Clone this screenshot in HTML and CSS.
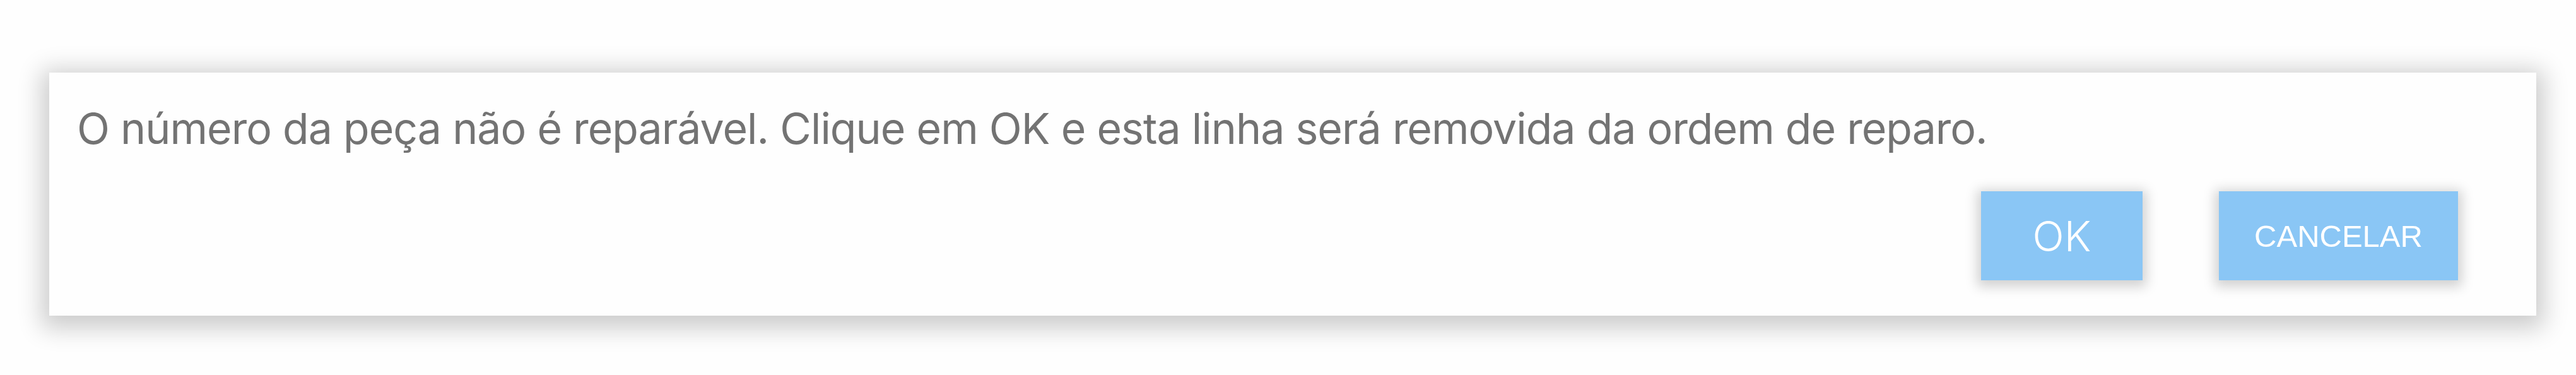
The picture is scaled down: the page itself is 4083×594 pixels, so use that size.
FILE: index.html
```html
<!DOCTYPE html>
<html lang="pt">
<head>
    <meta charset="UTF-8">
    <meta name="viewport" content="width=device-width, initial-scale=1.0">
    <title>Confirmar remoção</title>
    <link rel="stylesheet" href="styles.css">
</head>
<body>
    <div class="dialog">
        <p class="message">O número da peça não é reparável. Clique em OK e esta linha será removida da ordem de reparo.</p>
        <div class="actions">
            <button type="button" class="btn btn-ok">OK</button>
            <button type="button" class="btn btn-cancel">CANCELAR</button>
        </div>
    </div>
</body>
</html>
```

FILE: styles.css
```css
body {
    margin: 0;
    padding: 115px 63px 94px 78px;
    background-color: #fefefe;
    font-family: Inter, "Noto Sans", sans-serif;
}
.dialog {
    height: 385px;
    box-sizing: border-box;
    padding: 47px 124px 56px 44px;
    background-color: #fefefe;
    box-shadow: 0 8px 36px 12px rgba(0, 0, 0, 0.2);
    display: flex;
    flex-direction: column;
}
.message {
    margin: 0;
    font-size: 68px;
    line-height: 1.21;
    letter-spacing: -1px;
    color: #737373;
    white-space: nowrap;
}
.actions {
    margin-top: auto;
    display: flex;
    justify-content: flex-end;
    gap: 121px;
}
.btn {
    height: 141px;
    border: none;
    border-radius: 0;
    background-color: #8ac6f5;
    color: #fff;
    box-shadow: 0 4px 18px 6px rgba(0, 0, 0, 0.18);
    cursor: pointer;
    padding: 0;
}
.btn-ok {
    width: 256px;
    font-family: Inter, "Noto Sans", sans-serif;
    font-size: 66px;
    font-weight: 300;
}
.btn-cancel {
    width: 379px;
    font-family: "Liberation Sans", Arial, sans-serif;
    font-size: 49px;
}
```
